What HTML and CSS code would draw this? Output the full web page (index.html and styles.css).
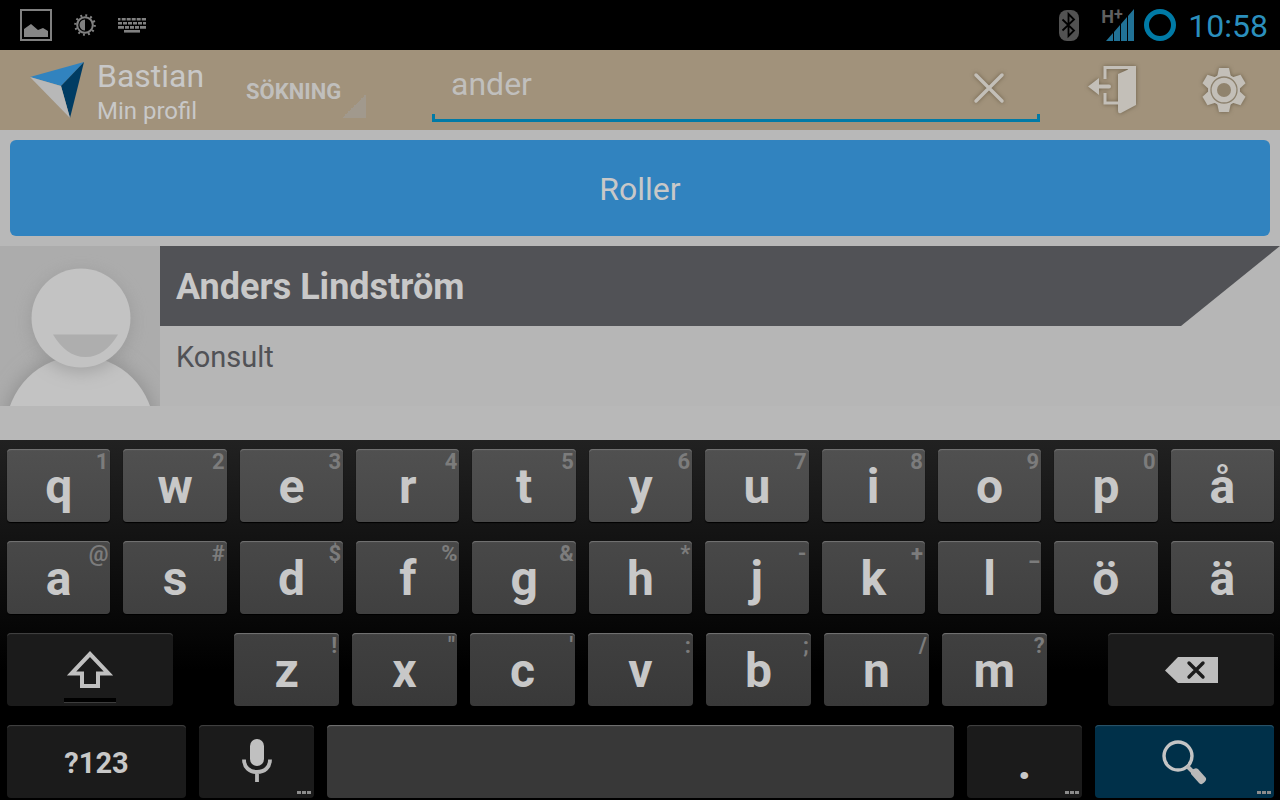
FILE: index.html
```html
<!DOCTYPE html>
<html lang="sv">
<head>
    <meta charset="UTF-8">
    <meta name="viewport" content="width=device-width, initial-scale=1.0">
    <title>Bastian</title>
    <link rel="stylesheet" href="styles.css">
</head>
<body>
    <svg width="0" height="0" class="defs">
        <symbol id="more" viewBox="0 0 14 3">
            <path d="M0 0h4v3H0zM5 0h4v3H5zM10 0h4v3h-4z"/>
        </symbol>
    </svg>

    <div class="status-bar">
        <div class="status-left">
            <svg width="32" height="32" viewBox="0 0 32 32">
                <rect x="1" y="1" width="30" height="30" fill="none" stroke="#808080" stroke-width="2"/>
                <path d="M4 28v-8l7-5 7 6 5-2 5 3v6z" fill="#868686"/>
            </svg>
            <svg width="22" height="22" viewBox="0 0 22 22">
                <circle cx="11" cy="11" r="9.6" fill="none" stroke="#808080" stroke-width="2.4" stroke-dasharray="1.9 3.127"/>
                <circle cx="11" cy="11" r="7.8" fill="none" stroke="#808080" stroke-width="2"/>
                <path d="M11 5.500a5.500 5.500 0 0 0 0 11z" fill="#808080"/>
            </svg>
            <svg width="28" height="15" viewBox="0 0 28 15">
                <g fill="none" stroke="#808080" stroke-width="2.600">
                    <path d="M0 1.300h28" stroke-dasharray="2.500 1.200 4 1 4 1 4 1 4 1 5 1"/>
                    <path d="M0 5.300h28" stroke-dasharray="4 1"/>
                    <path d="M0 9.400h28" stroke-dasharray="6 1 4 1 4 1 4 1 6"/>
                    <path d="M6 13.300h16"/>
                </g>
            </svg>
        </div>
        <div class="status-right">
            <svg width="20" height="31" viewBox="0 0 20 31">
                <rect width="20" height="31" rx="8" fill="#525252"/>
                <path d="M3.500 9.500l11.500 11-5.500 5.500V4l5.500 5.500-11.500 11" fill="none" stroke="#000" stroke-width="1.800"/>
            </svg>
            <div class="signal">
                <span class="network">H<sup>+</sup></span>
                <svg width="28" height="32" viewBox="0 0 28 32">
                    <path d="M0 32l7-8v8zM8 32v-9l6-7v16zM15 32V15l6-7v24zM22 32V7l6-7v32z" fill="#217296"/>
                </svg>
            </div>
            <svg width="32" height="32" viewBox="0 0 32 32">
                <circle cx="16" cy="16" r="13.500" fill="none" stroke="#007aa6" stroke-width="5"/>
            </svg>
            <span class="clock">10:58</span>
        </div>
    </div>

    <header class="action-bar">
        <a href="#" class="brand">
            <svg width="56" height="56" viewBox="0 0 56 56">
                <path d="M0 15L54 0 31 24z" fill="#3183bf"/>
                <path d="M54 0L40 56 31 24z" fill="#003c63"/>
                <path d="M0 15l31 9 9 32z" fill="#b8b8b8"/>
            </svg>
            <span class="brand-text">
                <span class="title">Bastian</span>
                <span class="subtitle">Min profil</span>
            </span>
        </a>
        <select class="mode" aria-label="Läge">
            <option>SÖKNING</option>
        </select>
        <div class="search">
            <input type="text" class="search-input" value="ander" aria-label="Sök">
            <button class="icon-btn" aria-label="Rensa">
                <svg class="shadow" width="32" height="32" viewBox="0 0 32 32">
                    <path d="M3 3l26 26M29 3L3 29" stroke="#c3bfb8" stroke-width="3.500" stroke-linecap="round"/>
                </svg>
            </button>
        </div>
        <div class="actions">
            <button class="icon-btn" aria-label="Logga ut">
                <svg class="shadow" width="50" height="50" viewBox="0 2 50 50">
                    <path d="M17 16V4.500h28M17 30v10h16" fill="none" stroke="#c3bfb8" stroke-width="3"/>
                    <path d="M30 11l18-8v39l-15 8q-3 1-3-2z" fill="#c3bfb8"/>
                    <path d="M42 3h6v5l-9 0z" fill="#c3bfb8"/>
                    <path d="M0 23.500L11 15v6.500h10a2 2 0 0 1 0 4H11V32z" fill="#c3bfb8"/>
                </svg>
            </button>
            <button class="icon-btn" aria-label="Inställningar">
                <svg class="shadow" width="44" height="44" viewBox="-22 -22 44 44">
                    <g fill="#c3bfb8">
                        <circle r="16"/>
                        <path id="tooth" d="M-7-13l2-9H5l2 9z"/>
                        <use href="#tooth" transform="rotate(60)"/>
                        <use href="#tooth" transform="rotate(120)"/>
                        <use href="#tooth" transform="rotate(180)"/>
                        <use href="#tooth" transform="rotate(240)"/>
                        <use href="#tooth" transform="rotate(300)"/>
                    </g>
                    <circle r="13" fill="none" stroke="#8c816d" stroke-width="1.300"/>
                    <circle r="7" fill="#90836d"/>
                </svg>
            </button>
        </div>
    </header>

    <main class="content">
        <button class="roles-btn">Roller</button>
        <a href="#" class="person">
            <svg class="avatar" width="160" height="160" viewBox="0 0 160 160">
                <defs>
                    <filter id="soft" x="-30%" y="-30%" width="160%" height="160%">
                        <feGaussianBlur stdDeviation="9"/>
                    </filter>
                </defs>
                <rect width="160" height="160" fill="#acacac"/>
                <circle cx="80" cy="184" r="76" fill="#909090" filter="url(#soft)"/>
                <circle cx="80" cy="184" r="74" fill="#c3c3c3"/>
                <circle cx="81" cy="76" r="49" fill="#909090" opacity=".7" filter="url(#soft)"/>
                <circle cx="81" cy="72" r="49.500" fill="#c3c3c3"/>
                <path d="M53 88.500h65C109 103 99 111 85.500 111S62 103 53 88.500z" fill="#aeaeae"/>
            </svg>
            <span class="person-info">
                <span class="person-name">Anders Lindström</span>
                <span class="person-role">Konsult</span>
            </span>
        </a>
    </main>

    <div class="keyboard">
        <div class="row">
            <button class="key">q<span class="hint">1</span></button>
            <button class="key">w<span class="hint">2</span></button>
            <button class="key">e<span class="hint">3</span></button>
            <button class="key">r<span class="hint">4</span></button>
            <button class="key">t<span class="hint">5</span></button>
            <button class="key">y<span class="hint">6</span></button>
            <button class="key">u<span class="hint">7</span></button>
            <button class="key">i<span class="hint">8</span></button>
            <button class="key">o<span class="hint">9</span></button>
            <button class="key">p<span class="hint">0</span></button>
            <button class="key">å</button>
        </div>
        <div class="row row-2">
            <button class="key">a<span class="hint">@</span></button>
            <button class="key">s<span class="hint">#</span></button>
            <button class="key">d<span class="hint">$</span></button>
            <button class="key">f<span class="hint">%</span></button>
            <button class="key">g<span class="hint">&amp;</span></button>
            <button class="key">h<span class="hint">*</span></button>
            <button class="key">j<span class="hint">-</span></button>
            <button class="key">k<span class="hint">+</span></button>
            <button class="key">l<span class="hint">_</span></button>
            <button class="key">ö</button>
            <button class="key">ä</button>
        </div>
        <div class="row row-3">
            <button class="key dark wide" aria-label="Skift">
                <svg width="52" height="64" viewBox="0 0 52 64">
                    <path d="M26 15L7.500 34.500H18V47h16V34.500h10.500z" fill="none" stroke="#c0c0c0" stroke-width="4"/>
                    <path d="M0 59h53v4H0z" fill="#000"/>
                    <path d="M0 63h53v1H0z" fill="#3c3c3c"/>
                </svg>
            </button>
            <div class="row letters">
                <button class="key">z<span class="hint">!</span></button>
                <button class="key">x<span class="hint">"</span></button>
                <button class="key">c<span class="hint">'</span></button>
                <button class="key">v<span class="hint">:</span></button>
                <button class="key">b<span class="hint">;</span></button>
                <button class="key">n<span class="hint">/</span></button>
                <button class="key">m<span class="hint">?</span></button>
            </div>
            <button class="key dark wide" aria-label="Radera">
                <svg width="54" height="28" viewBox="0 0 54 28">
                    <path d="M1 13.500L14 0h40v26H14z" fill="#bebebe"/>
                    <path d="M25 6l14 14M39 6L25 20" stroke="#1c1c1c" stroke-width="3.400" stroke-linecap="round"/>
                </svg>
            </button>
        </div>
        <div class="row row-4">
            <button class="key dark symbols">?123</button>
            <button class="key dark small" aria-label="Röstinmatning">
                <svg width="32" height="48" viewBox="0 0 32 48">
                    <rect x="9" y="0" width="14" height="27" rx="7" fill="#c0c0c0"/>
                    <path d="M3 20.500c0 8 5.500 12.500 13 12.500s13-4.500 13-12.500M16 33v10" fill="none" stroke="#b8b8b8" stroke-width="3.800"/>
                </svg>
                <svg class="more"><use href="#more"/></svg>
            </button>
            <button class="key space" aria-label="Mellanslag"></button>
            <button class="key dark small">.<svg class="more"><use href="#more"/></svg></button>
            <button class="key action" aria-label="Sök">
                <svg width="46" height="46" viewBox="0 0 46 46">
                    <circle cx="16" cy="16" r="14" fill="none" stroke="#c4c4c4" stroke-width="3.400"/>
                    <path d="M25 26l6 6" stroke="#b8b8b8" stroke-width="4"/>
                    <path d="M29 31q4-4 7-2l8 9q1 3-4 6-2 .5-3-1l-8-9z" fill="#b8b8b8"/>
                </svg>
                <svg class="more"><use href="#more"/></svg>
            </button>
        </div>
    </div>
</body>
</html>
```

FILE: styles.css
```css
* {
    box-sizing: border-box;
}
body {
    margin: 0;
    min-height: 100vh;
    display: flex;
    flex-direction: column;
    background-color: #b8b8b8;
    color: #c8c8c8;
    font-family: Roboto, "Liberation Sans", sans-serif;
}
a {
    color: inherit;
    text-decoration: none;
}
button, input, select {
    font-family: inherit;
    color: inherit;
    border: none;
    padding: 0;
    background: none;
}
button {
    cursor: pointer;
}
svg {
    display: block;
    flex-shrink: 0;
}
.defs {
    position: absolute;
}

/* status bar */
.status-bar {
    display: flex;
    justify-content: space-between;
    align-items: center;
    height: 50px;
    padding: 0 12px 0 20px;
    background-color: #000;
}
.status-left {
    display: flex;
    align-items: center;
    gap: 22px;
}
.status-right {
    display: flex;
    align-items: center;
    gap: 10px;
}
.signal {
    display: flex;
    align-items: flex-start;
    margin-left: 10px;
}
.network {
    width: 14px;
    margin-right: -9px;
    margin-left: 2px;
    color: #606060;
    font-size: 18px;
    font-weight: bold;
    line-height: 16px;
    white-space: nowrap;
}
.network sup {
    font-size: 16px;
    line-height: 0;
    vertical-align: 3px;
}
.clock {
    padding-top: 2px;
    margin-left: 2px;
    color: #2b8fbd;
    font-size: 32px;
}

/* action bar */
.action-bar {
    display: flex;
    height: 80px;
    padding: 0 34px 0 30px;
    background-color: #a1927b;
}
.brand {
    display: flex;
    align-items: center;
    gap: 11px;
    width: 200px;
}
.brand-text {
    display: flex;
    flex-direction: column;
    padding-top: 4px;
}
.title {
    font-size: 32px;
    line-height: 38px;
}
.subtitle {
    font-size: 24px;
    line-height: 32px;
}
.mode {
    appearance: none;
    width: 136px;
    height: 68px;
    padding: 14px 0 0 16px;
    font-size: 22px;
    font-weight: bold;
    color: #c0bfbd;
    background: linear-gradient(135deg, transparent 50%, #a1998d 50%) right bottom / 24px 24px no-repeat;
}
.search {
    flex: 1;
    display: flex;
    justify-content: space-between;
    align-items: center;
    height: 72px;
    margin-left: 66px;
    padding: 4px 35px 0 19px;
    background:
        linear-gradient(#007aa6, #007aa6) left bottom / 100% 3px no-repeat,
        linear-gradient(#007aa6, #007aa6) left bottom / 3px 8px no-repeat,
        linear-gradient(#007aa6, #007aa6) right bottom / 3px 8px no-repeat;
}
.search-input {
    flex: 1;
    min-width: 0;
    margin-bottom: 8px;
    font-size: 32px;
    color: #c0bfbd;
    outline: none;
}
.actions {
    display: flex;
    align-items: center;
    gap: 64px;
    margin-left: 48px;
}
.shadow {
    overflow: visible;
    filter: drop-shadow(0 0 2px rgba(70, 60, 40, 0.6));
}

/* search result */
.content {
    flex: 1;
}
.roles-btn {
    display: block;
    width: calc(100% - 20px);
    height: 96px;
    margin: 10px;
    padding-top: 2px;
    border-radius: 6px;
    background-color: #3183bf;
    font-size: 32px;
}
.person {
    display: flex;
    background-color: #b6b6b6;
}
.person-info {
    flex: 1;
    display: flex;
    flex-direction: column;
}
.person-name {
    padding: 2px 16px 0;
    background-color: #515256;
    clip-path: polygon(0 0, 100% 0, calc(100% - 99px) 100%, 0 100%);
    font-size: 36px;
    font-weight: bold;
    line-height: 78px;
}
.person-role {
    padding: 12px 16px;
    color: #515256;
    font-size: 29px;
    line-height: 38px;
}

/* keyboard */
.keyboard {
    display: flex;
    flex-direction: column;
    gap: 19px;
    padding: 9px 6px 2px 7px;
    background: linear-gradient(#212121, #000 230px);
}
.row {
    display: flex;
    gap: 13px;
}
.key {
    position: relative;
    flex: 1 1 0;
    display: flex;
    justify-content: center;
    align-items: center;
    min-width: 0;
    height: 73px;
    padding-top: 2px;
    border-radius: 4px;
    background: linear-gradient(#505050, #484848);
    box-shadow: inset 0 2px 1px -1px #757575, 0 1px 1px #000;
    font-size: 48px;
    font-weight: bold;
}
.row-2 .key {
    background: linear-gradient(#484848, #404040);
}
.row-3 .key {
    background: linear-gradient(#404040, #393939);
}
.row-3 .letters {
    flex: 812 1 0;
    margin: 0 48px;
}
.row .dark {
    background: #1b1b1b;
    box-shadow: inset 0 2px 1px -1px #444;
}
.row-3 .wide {
    flex: 166 1 0;
}
.row-4 {
    gap: 13px;
}
.row-4 .symbols {
    flex: 179 1 0;
    font-size: 29px;
}
.row-4 .small {
    flex: 115 1 0;
}
.row-4 .space {
    flex: 627 1 0;
    background: #383838;
}
.row-4 .action {
    flex: 179 1 0;
    background: #003049;
    box-shadow: inset 0 2px 1px -1px #2c566b;
}
.hint {
    position: absolute;
    top: 1px;
    right: 2px;
    color: #7c7c7c;
    font-size: 22px;
    line-height: 24px;
}
.more {
    position: absolute;
    right: 3px;
    bottom: 4px;
    width: 14px;
    height: 3px;
    fill: #8c8c8c;
}
```
